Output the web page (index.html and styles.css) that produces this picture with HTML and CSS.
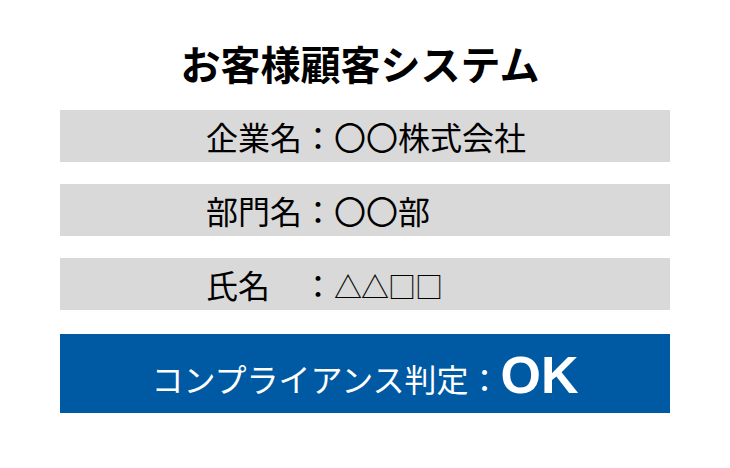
FILE: index.html
```html
<!DOCTYPE html>
<html lang="ja">
<head>
  <meta charset="UTF-8" />
  <meta name="viewport" content="width=device-width, initial-scale=1.0"/>
  <title>お客様顧客システム</title>
  <link rel="stylesheet" href="styles.css">
</head>
<body>
  <div class="panel">
    <h1>お客様顧客システム</h1>
    <div class="info-row">企業名：〇〇株式会社</div>
    <div class="info-row">部門名：〇〇部</div>
    <div class="info-row">氏名　：<span class="marks">△△□□</span></div>
    <div class="result">コンプライアンス判定：<span class="verdict">OK</span></div>
  </div>
</body>
</html>
```

FILE: styles.css
```css
body {
  font-family: "Noto Sans CJK JP", "Noto Sans", sans-serif;
  margin: 0;
  background-color: #fff;
  color: #000;
}

.panel {
  width: 610px;
  margin: 0 auto;
  padding-top: 35px;
}

h1 {
  font-size: 40px;
  font-weight: bold;
  text-align: center;
  margin: 0 0 19px;
  padding-right: 10px;
  line-height: 56px;
}

.info-row {
  background-color: #d9d9d9;
  height: 52px;
  line-height: 52px;
  font-size: 32px;
  padding-left: 146px;
  margin-bottom: 22px;
}

/* placeholder symbols are set a little smaller than the labels */
.marks {
  font-size: 28px;
  letter-spacing: -1px;
}

/* blue verdict bar under the info rows */
.result {
  background-color: #0059a3;
  color: #fff;
  height: 79px;
  margin-top: 24px;
  font-size: 32px;
  display: flex;
  justify-content: center;
  align-items: flex-end;
  padding-bottom: 12px;
  box-sizing: border-box;
}

.verdict {
  font-family: "Liberation Sans", Arial, sans-serif;
  font-weight: bold;
  font-size: 52px;
  line-height: 1;
}
```
